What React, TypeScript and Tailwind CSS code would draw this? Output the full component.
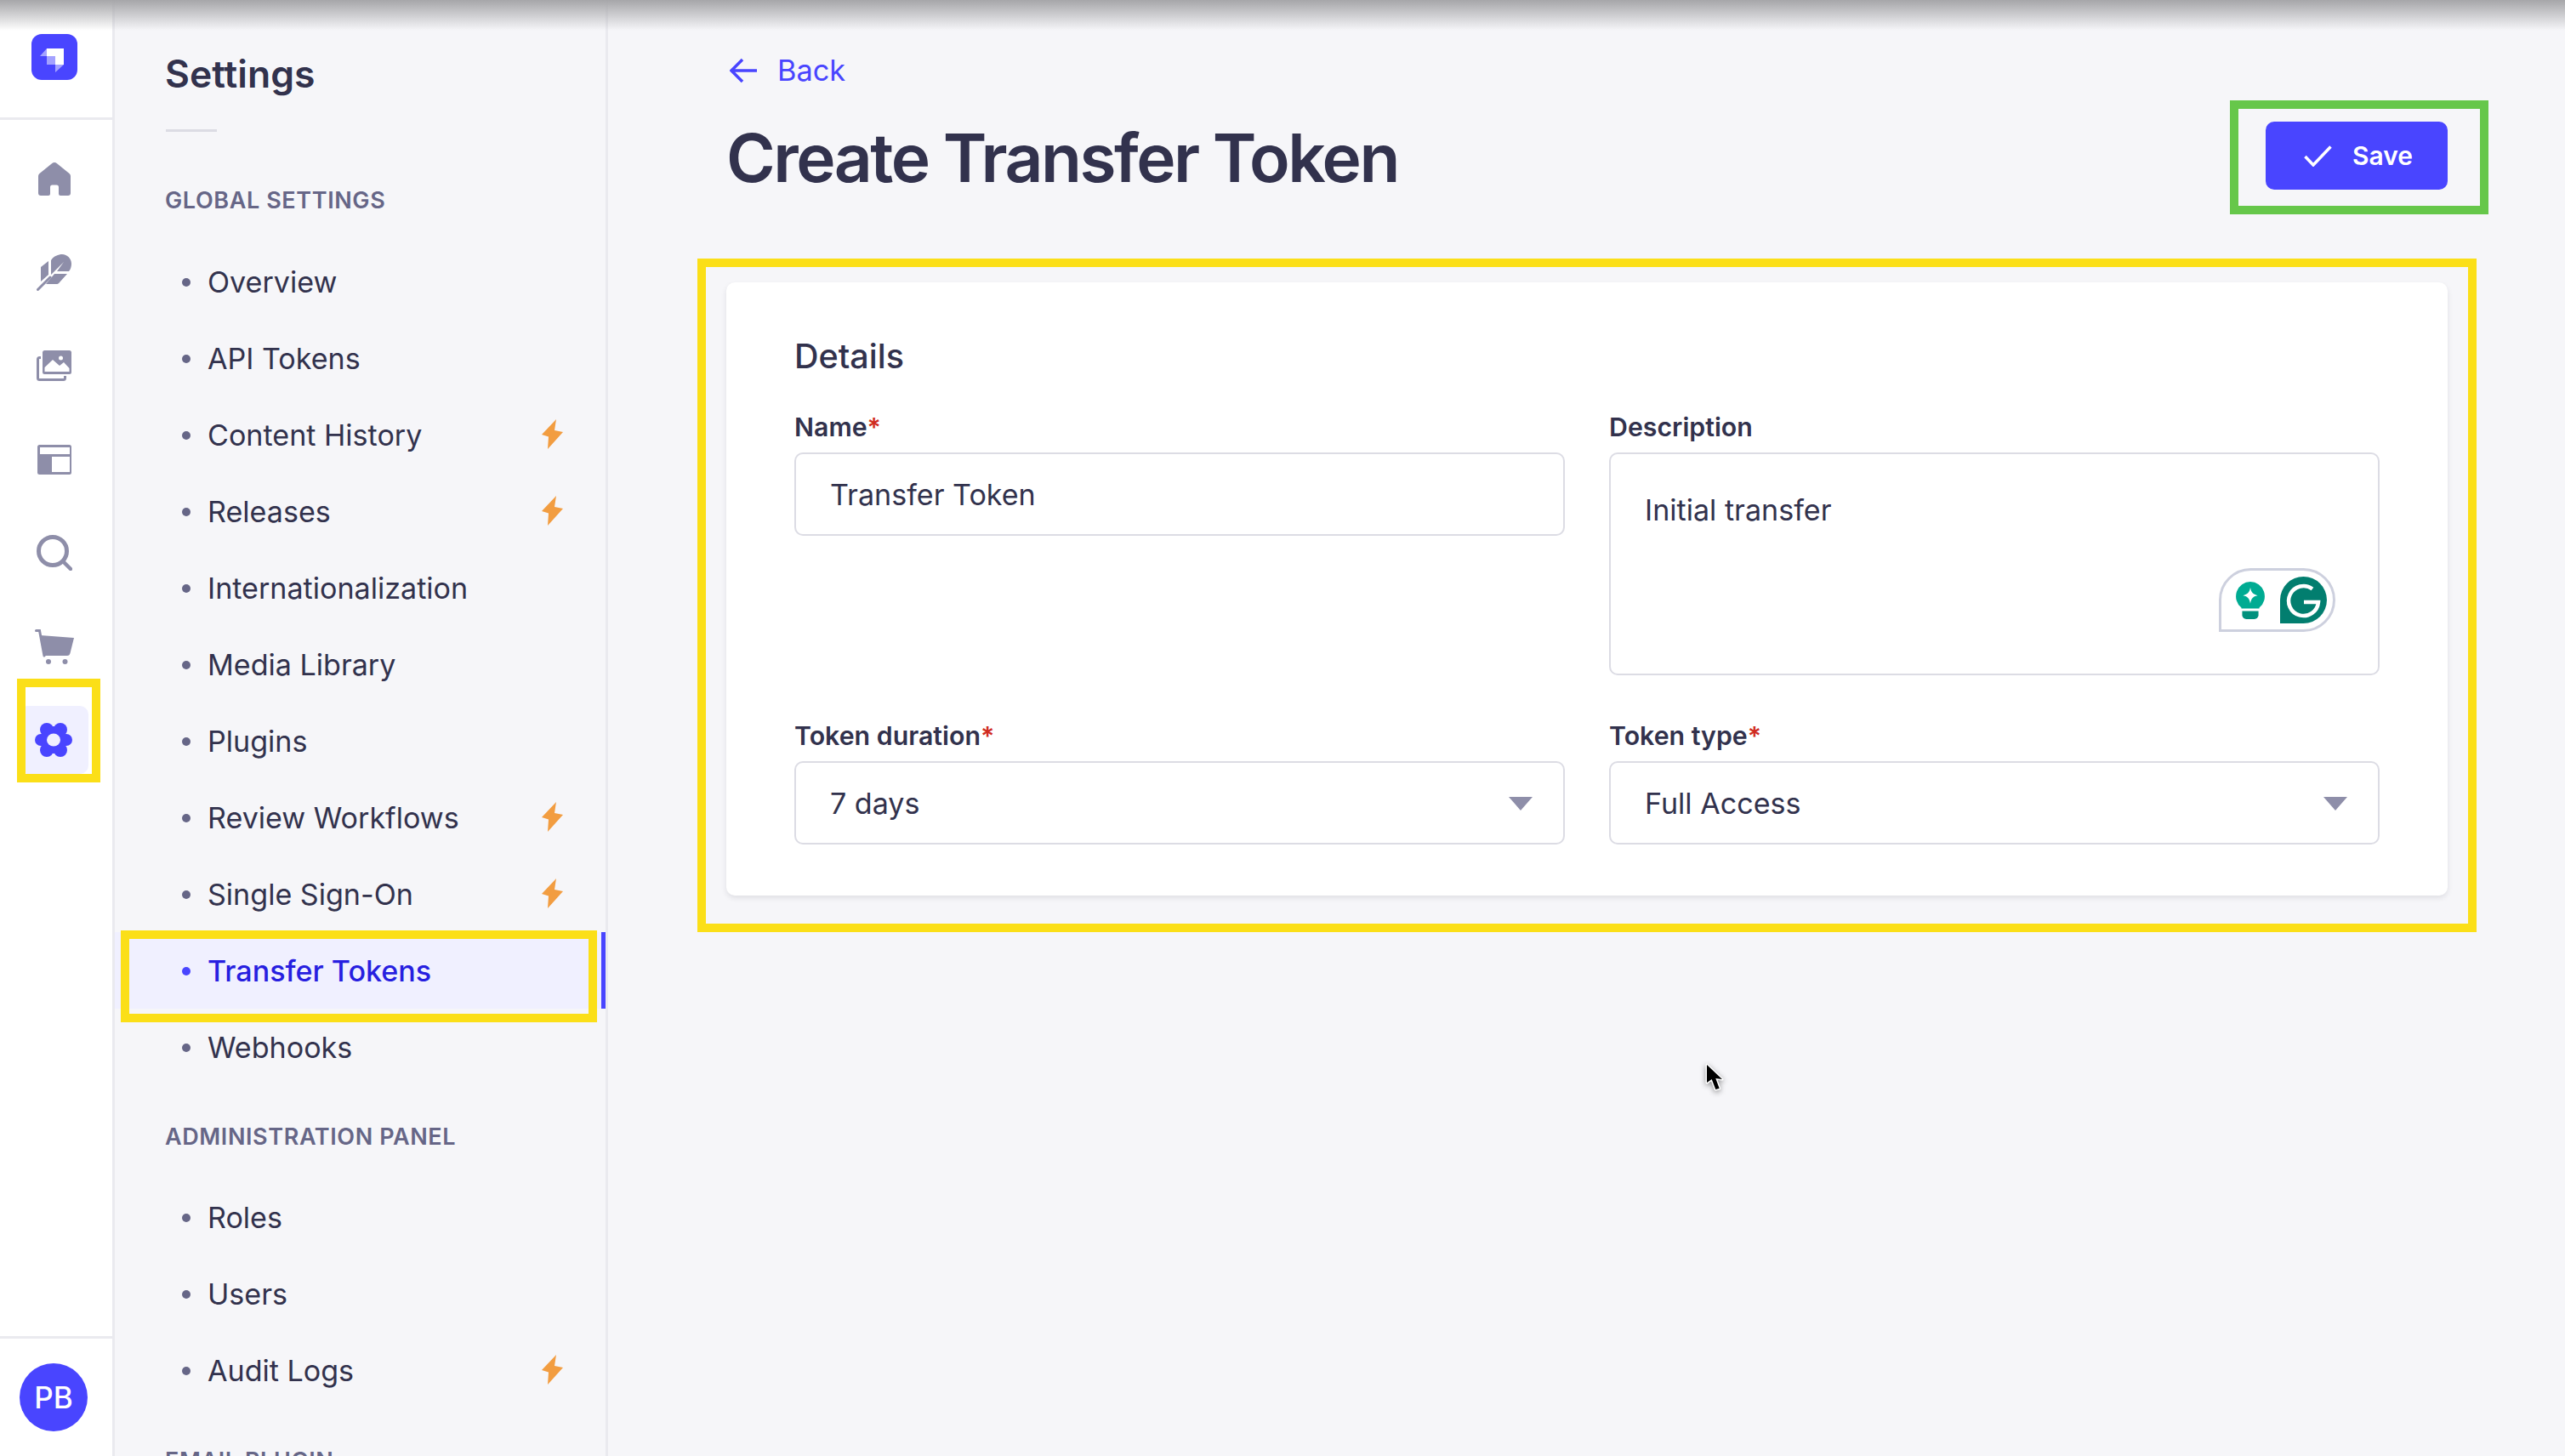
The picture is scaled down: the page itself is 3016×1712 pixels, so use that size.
const font = "font-['Inter','Noto_Sans',sans-serif]";

const globalItems = [
  { label: 'Overview' },
  { label: 'API Tokens' },
  { label: 'Content History', bolt: true },
  { label: 'Releases', bolt: true },
  { label: 'Internationalization' },
  { label: 'Media Library' },
  { label: 'Plugins' },
  { label: 'Review Workflows', bolt: true },
  { label: 'Single Sign-On', bolt: true },
  { label: 'Transfer Tokens', active: true },
  { label: 'Webhooks' },
];

const adminItems = [
  { label: 'Roles' },
  { label: 'Users' },
  { label: 'Audit Logs', bolt: true },
];

const Bolt = () => (
  <svg viewBox="0 0 25 35" className="w-[25px] h-[35px] -mt-[3px]">
    <path d="M17 0 L0 18 L8 20.5 L7 35 L25 15 L15 13 Z" fill="#f29d41" />
  </svg>
);

const Logo = () => (
  <svg viewBox="0 0 54 54" className="w-[54px] h-[54px]">
    <rect width="54" height="54" rx="12" fill="#4945ff" />
    <path d="M18 17 H38 V36 H28 V26 H18 Z" fill="#fff" />
    <path d="M18 26 H28 V36 H18 Z M10 26 L18 17 V26 Z M28 36 H38 L28 45 Z" fill="#fff" opacity=".5" />
  </svg>
);

const HomeIcon = () => (
  <svg viewBox="0 0 38 39" className="w-[38px] h-[39px]">
    <path
      d="M19 0c-1 0-2 .5-3 1.2L1.5 13C.5 14 0 15 0 16.500V36a3 3 0 0 0 3 3h9a2 2 0 0 0 2-2v-8a2.500 2.500 0 0 1 2.500-2.500h5A2.500 2.500 0 0 1 24 29v8a2 2 0 0 0 2 2h9a3 3 0 0 0 3-3V16.500c0-1.500-.5-2.500-1.500-3.500L22 1.200C21 .5 20 0 19 0z"
      fill="#8e8ea9"
    />
  </svg>
);

const FeatherIcon = () => (
  <svg viewBox="0 0 41 43" className="w-[41px] h-[43px]">
    <path d="M5 15 L14 8 V24 L5 32 Z" fill="#8e8ea9" />
    <path d="M17 7C20 2 26 0 30 0c6 0 11 5 11 11 0 3-1 7-3 9H24L32 9 L17 24 Z" fill="#8e8ea9" />
    <path d="M21 23 H36 L27 33 C26 34.500 25 35 23 35 H11 Z" fill="#8e8ea9" />
    <path d="M1.500 41.500 L16 27" stroke="#8e8ea9" strokeWidth="3" strokeLinecap="round" />
  </svg>
);

const MediaIcon = () => (
  <svg viewBox="0 0 42 36" className="w-[42px] h-[36px]">
    <rect x="1.500" y="8.500" width="32" height="26" rx="2" fill="none" stroke="#8e8ea9" strokeWidth="3" />
    <rect x="5" y="0" width="36" height="30" rx="3" fill="#fff" />
    <rect x="7" y="0" width="34" height="28" rx="2.500" fill="#8e8ea9" />
    <path d="M9.500 25 V20 L19 11 L27 18 L32 14 L38.500 21 V25 Z" fill="#fff" />
    <circle cx="28.500" cy="9" r="2.500" fill="#fff" />
  </svg>
);

const LayoutIcon = () => (
  <svg viewBox="0 0 40 35" className="w-[40px] h-[35px]">
    <rect width="40" height="35" rx="2.500" fill="#8e8ea9" />
    <rect x="3" y="3" width="35" height="8" fill="#fff" />
    <rect x="17" y="14" width="21" height="18" fill="#fff" />
  </svg>
);

const SearchIcon = () => (
  <svg viewBox="0 0 42 42" className="w-[42px] h-[42px]">
    <circle cx="19" cy="19" r="16.500" fill="none" stroke="#8e8ea9" strokeWidth="5" />
    <path d="M31 31 L40 40" stroke="#8e8ea9" strokeWidth="4.500" strokeLinecap="round" />
  </svg>
);

const CartIcon = () => (
  <svg viewBox="0 0 46 41" className="w-[46px] h-[41px]">
    <path d="M1.500 1.500 H5.500 L11 31" fill="none" stroke="#8e8ea9" strokeWidth="3" strokeLinecap="round" />
    <path d="M6.500 7 L46 10 L41.500 28 C41 30 40 31 38 31 H11 Z" fill="#8e8ea9" />
    <circle cx="16" cy="38" r="3" fill="#8e8ea9" />
    <circle cx="35.500" cy="38" r="3" fill="#8e8ea9" />
  </svg>
);

const GearIcon = () => (
  <svg viewBox="0 0 44 40" className="w-[44px] h-[40px]">
    <g fill="#4945ff">
      <circle cx="7" cy="20" r="7" />
      <circle cx="37" cy="20" r="7" />
      <circle cx="14" cy="8" r="8" />
      <circle cx="30" cy="8" r="8" />
      <circle cx="14" cy="32" r="8" />
      <circle cx="30" cy="32" r="8" />
      <circle cx="22" cy="20" r="16" />
    </g>
    <ellipse cx="22" cy="20" rx="8" ry="7.500" fill="#f0f0ff" />
  </svg>
);

const navIcons = [
  <HomeIcon key="home" />,
  <FeatherIcon key="feather" />,
  <MediaIcon key="media" />,
  <LayoutIcon key="layout" />,
  <SearchIcon key="search" />,
  <CartIcon key="cart" />,
];

const Caret = () => (
  <svg viewBox="0 0 28 16" className="w-[28px] h-[16px]">
    <path d="M0 0 H28 L14 16 Z" fill="#8e8ea9" />
  </svg>
);

const Grammarly = () => (
  <div className="absolute left-[2609px] top-[668px] w-[137px] h-[75px] bg-white border-[3px] border-[#cdd0de] rounded-[38px] rounded-bl-none flex items-center gap-[17px] pl-[16px]">
    <svg viewBox="0 0 36 46" className="w-[36px] h-[44px]">
      <path d="M18 0a18 18 0 0 1 11 32v1H7v-1A18 18 0 0 1 18 0z" fill="#00ab92" />
      <path d="M18 7c1 6 3 8 9 10-6 1-8 4-9 10-1-6-3-9-9-10 6-2 8-4 9-10z" fill="#fff" />
      <path d="M8 36h20v5a5 5 0 0 1-5 5H13a5 5 0 0 1-5-5z" fill="#00917d" />
    </svg>
    <svg viewBox="0 0 55 55" className="w-[55px] h-[55px]">
      <path d="M27.500 0a27.500 27.500 0 0 1 0 55H0V27.500A27.500 27.500 0 0 1 27.500 0z" fill="#027e6f" />
      <path d="M38 14.500A17.500 17.500 0 1 0 45 30H28" fill="none" stroke="#fff" strokeWidth="4.500" />
    </svg>
  </div>
);

function NavRow({ label, bolt, active }: { label: string; bolt?: boolean; active?: boolean }) {
  return (
    <div
      className={`h-[90px] pt-[1px] flex items-center pl-[79px] pr-[50px] ${
        active ? 'bg-[#f0f0ff] border-r-[5px] border-[#4945ff] text-[#271fe0] font-medium' : 'text-[#32324d]'
      }`}
    >
      <span className={`w-[10px] h-[10px] rounded-full ${active ? 'bg-[#4945ff]' : 'bg-[#666687]'}`} />
      <span className="ml-[20px] flex-1 text-[34.1px]">{label}</span>
      {bolt && <Bolt />}
    </div>
  );
}

const SectionTitle = ({ children, className }: { children: string; className: string }) => (
  <div className={`h-[40px] leading-[42px] pl-[59px] text-[27px] font-semibold uppercase tracking-[0.6px] text-[#666687] ${className}`}>
    {children}
  </div>
);

const Label = ({ text, required }: { text: string; required?: boolean }) => (
  <div className="h-[36px] leading-[33px] mb-[10px] text-[30.3px] font-semibold text-[#32324d]">
    {text}
    {required && <span className="text-[#d02b20]">*</span>}
  </div>
);

const Field = ({ value, caret }: { value: string; caret?: boolean }) => (
  <div className="h-[98px] pl-[40px] pr-[41px] pt-[2px] flex items-center justify-between bg-white border-[2px] border-[#dcdce4] rounded-[10px] text-[34.1px] text-[#32324d]">
    <span>{value}</span>
    {caret && <span className="-mr-[5px] flex"><Caret /></span>}
  </div>
);

export default function App() {
  return (
    <div className={`relative w-[3016px] h-[1712px] overflow-hidden flex bg-[#f6f6f9] ${font}`}>
      {/* main nav */}
      <div className="w-[135px] shrink-0 flex flex-col bg-white border-r-[3px] border-[#eaeaef]">
        <div className="h-[141px] shrink-0 pt-[40px] pl-[37px] border-b-[3px] border-[#eaeaef]">
          <Logo />
        </div>
        <div className="flex-1 pt-[14px] flex flex-col">
          {navIcons.map((icon, i) => (
            <div key={i} className="h-[110px] flex items-center justify-center pr-[5px]">{icon}</div>
          ))}
          <div className="h-[80px] mt-[15px] ml-[22px] w-[82px] rounded-[10px] bg-[#f0f0ff] flex items-center justify-center">
            <GearIcon />
          </div>
        </div>
        <div className="h-[141px] shrink-0 border-t-[3px] border-[#eaeaef] pt-[29px] pl-[23px]">
          <div className="w-[80px] h-[80px] rounded-full bg-[#4945ff] flex items-center justify-center text-[35px] font-medium text-white">
            PB
          </div>
        </div>
      </div>

      {/* settings nav */}
      <div className="w-[580px] shrink-0 border-r-[3px] border-[#eaeaef]">
        <div className="mt-[62px] pl-[59px] h-[50px] leading-[50px] text-[44.5px] font-semibold text-[#32324d]">Settings</div>
        <div className="mt-[40px] ml-[60px] w-[60px] h-[3px] bg-[#dcdce4]" />
        <SectionTitle className="mt-[60px]">Global Settings</SectionTitle>
        <div className="mt-[31px]">
          {globalItems.map((item) => (
            <NavRow key={item.label} {...item} />
          ))}
        </div>
        <SectionTitle className="mt-[40px]">Administration Panel</SectionTitle>
        <div className="mt-[30px]">
          {adminItems.map((item) => (
            <NavRow key={item.label} {...item} />
          ))}
        </div>
        <SectionTitle className="mt-[41px]">Email Plugin</SectionTitle>
      </div>

      {/* page */}
      <div className="flex-1 pl-[139px] pr-[138px] pt-[58px]">
        <div className="h-[50px] flex items-center gap-[24px] pl-[4px] text-[34.3px] text-[#4945ff]">
          <svg viewBox="0 0 32 30" className="w-[32px] h-[30px]">
            <path d="M32 15 H3 M15 2 L2 15 L15 28" fill="none" stroke="#4945ff" strokeWidth="3.500" />
          </svg>
          <span>Back</span>
        </div>
        <div className="mt-[28px] h-[196px] flex justify-between items-start">
          <h1 className="h-[100px] leading-[100px] text-[78.4px] tracking-[-2.5px] font-semibold text-[#32324d]">Create Transfer Token</h1>
          <button className="mt-[7px] w-[214px] h-[80px] pl-[4px] rounded-[10px] bg-[#4945ff] flex items-center justify-center gap-[24px] text-[30px] font-semibold text-white">
            <svg viewBox="0 0 33 25" className="w-[33px] h-[25px]">
              <path d="M1.500 13 L11 23 L31.500 1.500" fill="none" stroke="#fff" strokeWidth="3.500" />
            </svg>
            Save
          </button>
        </div>
        <div className="bg-white rounded-[10px] shadow-[0_3px_6px_rgba(33,33,52,0.1)] px-[80px] pt-[62px] pb-[60px]">
          <div className="h-[50px] leading-[50px] text-[39.500px] font-medium text-[#32324d]">Details</div>
          <div className="mt-[42px] grid grid-cols-2 gap-x-[52px] gap-y-[55px]">
            <div>
              <Label text="Name" required />
              <Field value="Transfer Token" />
            </div>
            <div>
              <Label text="Description" />
              <div className="h-[262px] pl-[40px] pr-[41px] pt-[41px] bg-white border-[2px] border-[#dcdce4] rounded-[10px] text-[34.1px] leading-[50px] text-[#32324d]">
                Initial transfer
              </div>
            </div>
            <div>
              <Label text="Token duration" required />
              <Field value="7 days" caret />
            </div>
            <div>
              <Label text="Token type" required />
              <Field value="Full Access" caret />
            </div>
          </div>
        </div>
      </div>

      <Grammarly />

      {/* annotation frames */}
      <div className="absolute left-[20px] top-[798px] w-[98px] h-[122px] border-[10px] border-[#fbdf18]" />
      <div className="absolute left-[142px] top-[1094px] w-[560px] h-[108px] border-[10px] border-[#fbdf18]" />
      <div className="absolute left-[820px] top-[304px] w-[2092px] h-[792px] border-[10px] border-[#fbdf18]" />
      <div className="absolute left-[2622px] top-[118px] w-[304px] h-[134px] border-[10px] border-[#66c74a]" />

      {/* cursor */}
      <svg viewBox="0 0 24 38" className="absolute left-[2005px] top-[1248px] w-[24px] h-[38px] drop-shadow-[0_2px_3px_rgba(0,0,0,0.4)]">
        <path
          d="M2 4 V25 L7.700 21 L12.300 33 L16.700 31.700 L12.300 20 L20 21 Z"
          fill="#000"
          stroke="#fff"
          strokeWidth="3"
          strokeLinejoin="round"
          paintOrder="stroke"
        />
      </svg>

      {/* top shadow of the capture */}
      <div className="absolute left-0 top-0 w-full h-[36px] bg-linear-to-b from-[#a6a6a9] to-transparent" />
    </div>
  );
}
